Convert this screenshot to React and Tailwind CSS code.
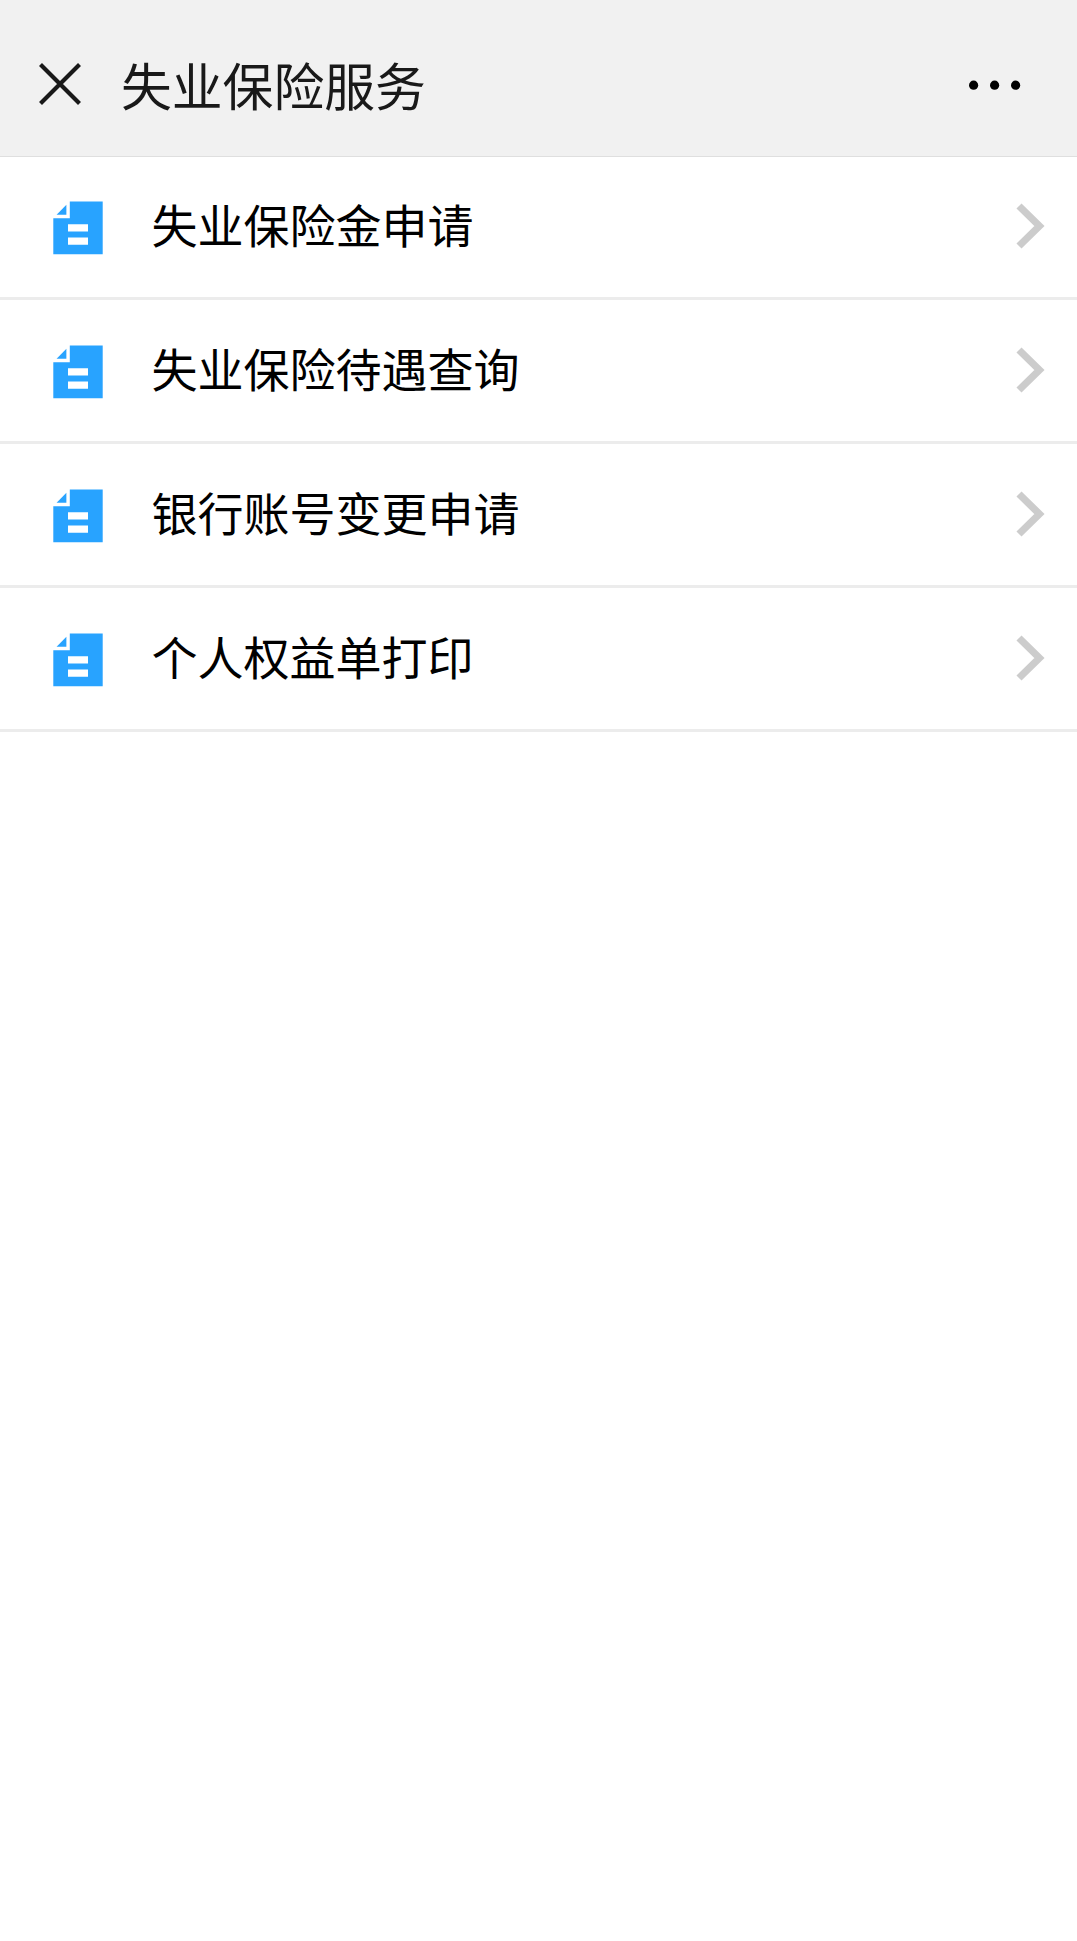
const services = [
  { id: 1, name: '失业保险金申请' },
  { id: 2, name: '失业保险待遇查询' },
  { id: 3, name: '银行账号变更申请' },
  { id: 4, name: '个人权益单打印' },
];

function CloseIcon() {
  return (
    <svg className="w-[42px] h-[42px]" viewBox="0 0 42 42" fill="none" stroke="#191919" strokeWidth="4.2">
      <path d="M1.5 1.5 40.5 40.5M40.5 1.5 1.5 40.5" />
    </svg>
  );
}

function MoreIcon() {
  return (
    <svg className="mt-0.5 w-[52px] h-[10px]" viewBox="0 0 52 10" fill="#000">
      <circle cx="4.6" cy="5.2" r="4.6" />
      <circle cx="25.6" cy="5.2" r="4.6" />
      <circle cx="46.6" cy="5.2" r="4.6" />
    </svg>
  );
}

function DocIcon() {
  return (
    <svg className="mt-0.5 w-[50px] h-[54px]" viewBox="0 0 50 54">
      <path
        fill="#28a3ff"
        fillRule="evenodd"
        d="M16.8.5H49.7V53.2H.3V17.2H16.8ZM15 23.2V30.6H35V23.2ZM15 36.4V43.7H35V36.4Z"
      />
      <path fill="#28a3ff" d="M13.4 3.8V13.7H3.6Z" />
    </svg>
  );
}

function ChevronIcon() {
  return (
    <svg className="mb-0.5 w-[30px] h-[46px]" viewBox="0 0 30 46" fill="none" stroke="#ccc" strokeWidth="7.2">
      <path d="M3 3 23.4 23 3 43" />
    </svg>
  );
}

function ServiceRow({ name }) {
  return (
    <li className="flex h-36 items-center border-b-3 border-[#ececec] pl-[53px] pr-[31px]">
      <DocIcon />
      <span className="ml-[48.5px] mb-[7px] flex-1 text-[46px] leading-none text-black">{name}</span>
      <ChevronIcon />
    </li>
  );
}

export default function App() {
  return (
    <div className="min-h-screen bg-white font-['Noto_Sans_CJK_SC',sans-serif]">
      <header className="flex h-[157px] items-center border-b border-[#dfdfdf] bg-[#f1f1f1] pt-3 pl-[39px] pr-14">
        <CloseIcon />
        <h1 className="ml-10 mt-px flex-1 text-[50.8px] leading-none text-[#191919]">失业保险服务</h1>
        <MoreIcon />
      </header>
      <ul className="-mt-px">
        {services.map((s) => (
          <ServiceRow key={s.id} name={s.name} />
        ))}
      </ul>
    </div>
  );
}
